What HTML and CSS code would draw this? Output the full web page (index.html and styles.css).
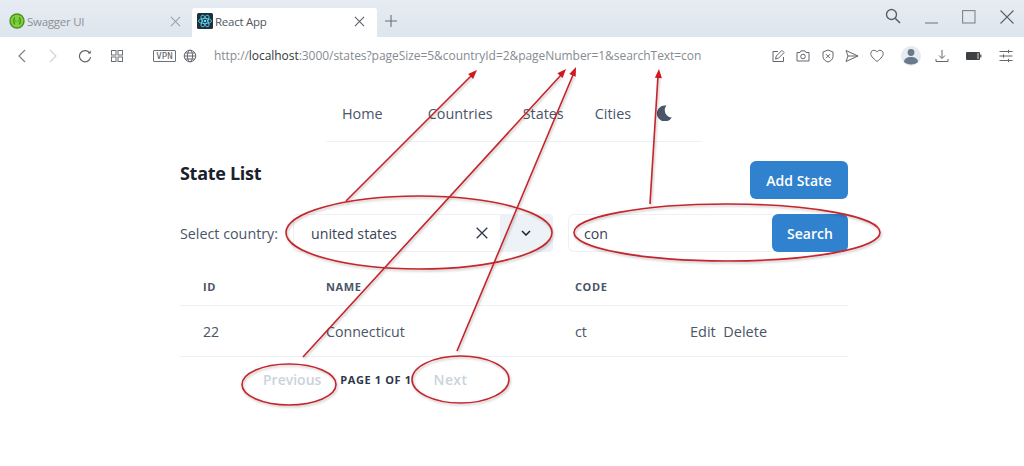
FILE: index.html
```html
<!DOCTYPE html>
<html lang="en">
<head>
<meta charset="utf-8">
<title>React App</title>
<link rel="stylesheet" href="styles.css">
</head>
<body>
<div class="browser">
  <div class="tabbar">
    <div class="tab">
      <svg class="favicon" viewBox="0 0 16 16"><circle cx="8" cy="8" r="7.7" fill="#4f8f25"/><circle cx="8" cy="8" r="6.3" fill="#7fd13b"/><path d="M6 4.600c-1.500 0-.6 3.400-1.700 3.400 1.100 0 .2 3.400 1.700 3.400M10 4.600c1.500 0 .6 3.400 1.700 3.400-1.100 0-.2 3.400-1.700 3.400" fill="none" stroke="#2c6a12" stroke-width="1"/><circle cx="6.800" cy="8" r=".6" fill="#2c6a12"/><circle cx="9.200" cy="8" r=".6" fill="#2c6a12"/></svg>
      <span class="tab-title">Swagger UI</span>
      <svg class="tab-x" viewBox="0 0 12 12"><path d="M1 1l10 10M11 1L1 11" stroke="#9aa0a6" stroke-width="1.100"/></svg>
    </div>
    <div class="tab tab-active">
      <svg class="favicon" viewBox="0 0 16 16"><rect width="16" height="16" rx="1.500" fill="#20303a"/><g fill="none" stroke="#61dafb" stroke-width=".8"><ellipse cx="8" cy="8" rx="6.500" ry="2.600"/><ellipse cx="8" cy="8" rx="6.500" ry="2.600" transform="rotate(60 8 8)"/><ellipse cx="8" cy="8" rx="6.500" ry="2.600" transform="rotate(120 8 8)"/></g><circle cx="8" cy="8" r="1.300" fill="#61dafb"/></svg>
      <span class="tab-title">React App</span>
      <svg class="tab-x" viewBox="0 0 12 12"><path d="M1 1l10 10M11 1L1 11" stroke="#555b63" stroke-width="1.100"/></svg>
    </div>
    <svg class="tab-plus" viewBox="0 0 12 12"><path d="M6 0v12M0 6h12" stroke="#6b7078" stroke-width="1.100"/></svg>
    <div class="window-controls">
      <svg class="win-search" viewBox="0 0 16 16"><circle cx="6.500" cy="6.500" r="5" fill="none" stroke="#5d6064" stroke-width="1.400"/><path d="M10.200 10.200L15 15" stroke="#5d6064" stroke-width="1.600"/></svg>
      <svg class="win-min" viewBox="0 0 14 14"><path d="M0 13h13" stroke="#80858b" stroke-width="1.200"/></svg>
      <svg class="win-max" viewBox="0 0 14 14"><rect x=".6" y=".6" width="12.400" height="12.400" fill="none" stroke="#80858b" stroke-width="1.100"/></svg>
      <svg class="win-close" viewBox="0 0 14 14"><path d="M.5.5l13 13M13.500.5l-13 13" stroke="#5d6064" stroke-width="1.100"/></svg>
    </div>
  </div>
  <div class="toolbar">
    <svg class="tb tb-back" viewBox="0 0 10 14"><path d="M8 1L2 7l6 6" fill="none" stroke="#7b8086" stroke-width="1.200"/></svg>
    <svg class="tb tb-fwd" viewBox="0 0 10 14"><path d="M2 1l6 6-6 6" fill="none" stroke="#ced1d5" stroke-width="1.200"/></svg>
    <svg class="tb tb-reload" viewBox="0 0 14 14"><path d="M11.800 4.200A5.600 5.600 0 1 0 12.600 8" fill="none" stroke="#63676c" stroke-width="1.200"/><path d="M9.600 4.600h3.200V1.400z" fill="#63676c"/></svg>
    <svg class="tb tb-grid" viewBox="0 0 14 14"><g fill="none" stroke="#6d7177"><rect x="1.500" y="1.500" width="4.500" height="4.500"/><rect x="8" y="1.500" width="4.500" height="4.500"/><rect x="1.500" y="8" width="4.500" height="4.500"/><rect x="8" y="8" width="4.500" height="4.500"/></g></svg>
    <span class="vpn">VPN</span>
    <svg class="tb tb-globe" viewBox="0 0 14 14"><g fill="none" stroke="#63676c"><circle cx="7" cy="7" r="5.800"/><ellipse cx="7" cy="7" rx="2.600" ry="5.800"/><path d="M1.200 7h11.600M2 4h10M2 10h10"/></g></svg>
    <div class="url">http://<b>localhost</b>:3000/states?pageSize=5&amp;countryId=2&amp;pageNumber=1&amp;searchText=con</div>
    <div class="ext-icons">
      <svg class="ext" viewBox="0 0 14 14"><path d="M6 2.500H1v10h10.500V8M3.500 10l.8-3 5.600-5.600 2.200 2.200L6.500 9.200z" fill="none" stroke="#63676c" stroke-width="1"/></svg>
      <svg class="ext" viewBox="0 0 14 14"><path d="M1 3.500h3l1-1.600h4l1 1.600h3v8.500H1z" fill="none" stroke="#63676c"/><circle cx="7" cy="7.500" r="2.300" fill="none" stroke="#63676c"/></svg>
      <svg class="ext" viewBox="0 0 14 14"><path d="M7 1l5 2v4.500c0 3-2.500 4.700-5 5.500-2.500-.8-5-2.500-5-5.500V3z" fill="none" stroke="#63676c"/><path d="M5 5.200l4 4M9 5.200l-4 4" stroke="#63676c"/></svg>
      <svg class="ext" viewBox="0 0 14 14"><path d="M1 1.500L13 7 1 12.500 3 7zM3 7h10" fill="none" stroke="#63676c"/></svg>
      <svg class="ext" viewBox="0 0 14 14"><path d="M7 12.500C2.500 9 .8 6.800.8 4.500.8 2.500 2.300 1.300 4 1.300c1.300 0 2.400.7 3 1.800.6-1.100 1.700-1.800 3-1.800 1.700 0 3.200 1.200 3.200 3.200 0 2.300-1.700 4.500-6.200 8z" fill="none" stroke="#63676c"/></svg>
      <svg class="avatar" viewBox="0 0 20 20"><circle cx="10" cy="10" r="10" fill="#e6ebf1"/><circle cx="10" cy="6.500" r="3.400" fill="#6a7a8c"/><path d="M3 16c0-3.500 3-5 7-5s7 1.500 7 5c-1.500 1.600-4 2.400-7 2.400S4.500 17.600 3 16z" fill="#6a7a8c"/></svg>
      <svg class="ext ext-dl" viewBox="0 0 14 14"><path d="M7 1v8M4 6.500L7 9.500l3-3M1 10v2.500h12V10" fill="none" stroke="#63676c"/></svg>
      <svg class="ext ext-batt" viewBox="0 0 16 10"><rect x="0" y="1" width="14" height="8" rx="1" fill="#3e4144"/><rect x="11" y="2" width="2" height="6" fill="#8a8e92"/><rect x="14" y="3.500" width="1.500" height="3" fill="#63676c"/></svg>
      <svg class="ext ext-tune" viewBox="0 0 14 14"><path d="M.5 2.500h13M.5 7h13M.5 11.500h13M9.500.8v3.400M4.500 5.300v3.400M9.500 9.800v3.400" fill="none" stroke="#63676c"/></svg>
    </div>
  </div>
  <div class="page">
    <nav class="nav">
      <a class="nav-link nav-home">Home</a>
      <a class="nav-link nav-countries">Countries</a>
      <a class="nav-link nav-states">States</a>
      <a class="nav-link nav-cities">Cities</a>
      <svg class="moon" viewBox="0 0 16 16"><path d="M10.500.6A8 8 0 1 0 15.800 12.400 7.200 7.200 0 0 1 10.500.6z" fill="#4a5568"/></svg>
    </nav>
    <main class="content">
      <div class="head-row">
        <h1 class="title">State List</h1>
        <button class="btn btn-add">Add State</button>
      </div>
      <div class="filter-row">
        <label class="select-label">Select country:</label>
        <div class="select">
          <span class="select-value">united states</span>
          <svg class="select-clear" viewBox="0 0 12 12"><path d="M.7.7l10.600 10.600M11.300.7L.7 11.300" stroke="#2d3748" stroke-width="1.300"/></svg>
          <span class="select-toggle"><svg viewBox="0 0 10 6" class="chev"><path d="M1 1l4 4 4-4" fill="none" stroke="#1a202c" stroke-width="1.500"/></svg></span>
        </div>
        <div class="search">
          <span class="search-input">con</span>
          <button class="btn btn-search">Search</button>
        </div>
      </div>
      <div class="table">
        <div class="tr th-row">
          <span class="c-id">ID</span><span class="c-name">NAME</span><span class="c-code">CODE</span><span class="c-act"></span>
        </div>
        <div class="tr td-row">
          <span class="c-id">22</span><span class="c-name">Connecticut</span><span class="c-code">ct</span><span class="c-act">Edit&nbsp; Delete</span>
        </div>
      </div>
      <div class="pager">
        <span class="pg-btn pg-prev">Previous</span>
        <span class="pg-text">PAGE 1 OF 1</span>
        <span class="pg-btn pg-next">Next</span>
      </div>
    </main>
  </div>
  <svg class="annot" viewBox="0 0 1024 466">
    <defs><filter id="sh" x="-5%" y="-5%" width="110%" height="115%"><feDropShadow dx="1" dy="1.500" stdDeviation="1" flood-color="#000" flood-opacity=".25"/></filter></defs>
    <g filter="url(#sh)" fill="none" stroke="#c4252c" stroke-width="1.600">
      <ellipse cx="419" cy="232.500" rx="133" ry="36.500"/>
      <ellipse cx="727" cy="232.500" rx="153" ry="28.500"/>
      <ellipse cx="289" cy="384.500" rx="47" ry="20.500"/>
      <ellipse cx="460.500" cy="379.500" rx="48.500" ry="23.500"/>
      <path d="M346 201L472 75M303 357L561 75M457 351L573 75M650 204L658 76"/>
    </g>
    <g fill="#d01820">
      <path d="M477 70l-8.900 3.900 5 5z"/>
      <path d="M566 69l-8.600 4.200 5.200 4.800z"/>
      <path d="M576 67l-6.700 6.900 6.400 2.800z"/>
      <path d="M659 69l-4.100 8.800 7 .4z"/>
    </g>
  </svg>
</div>
</body>
</html>
```
FILE: styles.css
```css
* { box-sizing: border-box; }
html, body { margin: 0; height: 100%; background: #fff; overflow: hidden; }
body { font-family: "Open Sans", "Noto Sans", sans-serif; color: #4a5568; }
.browser { position: relative; width: 1024px; height: 466px; }

.tabbar { height: 37px; display: flex; align-items: flex-end; padding-left: 3px; background: linear-gradient(#e7ecf3, #dde5ed); }
.tab { width: 192px; height: 29px; display: flex; align-items: center; padding: 0 5px 3px 6px; font-size: 11.5px; letter-spacing: -.25px; color: #8b9097; }
.tab-active { width: 185px; margin-left: -3px; background: #fff; color: #51565c; border-radius: 3px 3px 0 0; padding-left: 5px; }
.favicon { width: 16px; height: 16px; flex: none; }
.tab-title { margin-left: 2px; flex: 1; }
.tab-active .tab-title { margin-left: 2px; }
.tab-x { width: 11px; height: 11px; margin-right: 1px; }
.tab:first-child .tab-x { margin-right: 9px; }
.tab-active .tab-x { margin-right: 7px; }
.tab-plus { width: 12px; height: 12px; margin: 0 0 10px 8px; }
.window-controls { margin-left: auto; height: 37px; display: flex; align-items: center; position: relative; padding-right: 10px; }
.win-search { width: 16px; height: 16px; margin: 0 24px 6px 0; }
.win-min { width: 14px; height: 14px; margin: 0 23px 4px 0; }
.win-max { width: 14px; height: 14px; margin: 0 24px 4px 0; }
.win-close { width: 14px; height: 14px; margin: 0 0 4px 0; }

.toolbar { height: 37px; display: flex; align-items: center; position: relative; }
.tb { flex: none; }
.tb-back { width: 10px; height: 14px; margin-left: 17px; }
.tb-fwd { width: 10px; height: 14px; margin-left: 21px; }
.tb-reload { width: 14px; height: 14px; margin-left: 20px; }
.tb-grid { width: 14px; height: 14px; margin-left: 18px; }
.vpn { margin-left: 29px; width: 23px; height: 12px; border: 1px solid #6d7177; border-radius: 1px; font: 9px/10px "DejaVu Sans Mono", monospace; color: #5d6165; text-align: center; }
.tb-globe { width: 14px; height: 14px; margin-left: 7px; }
.url { margin-left: 17px; font-size: 12px; letter-spacing: -.05px; color: #868b91; white-space: nowrap; }
.url b { font-weight: 400; color: #33373b; }
.ext-icons { margin-left: auto; display: flex; align-items: center; padding-right: 11px; }
.ext { width: 14px; height: 14px; margin-right: 10.5px; }
.avatar { width: 20px; height: 20px; margin: 0 14px 0 7px; }
.ext-dl { margin-right: 17px; }
.ext-batt { width: 16px; height: 10px; margin-right: 17px; }
.ext-tune { margin-right: 0; }

.page { display: flex; flex-direction: column; align-items: center; }
.nav { width: 376px; height: 68px; margin-left: 4px; padding: 13px 0 2px 16px; display: flex; align-items: center; border-bottom: 1px solid #edf0f4; font-size: 14.4px; color: #4a5568; }
.nav-countries { margin-left: 45px; }
.nav-states { margin-left: 30px; }
.nav-cities { margin-left: 31px; }
.moon { width: 16px; height: 16px; margin-left: 25px; }

.content { width: 668px; margin-left: 4px; }
.head-row { display: flex; justify-content: space-between; align-items: flex-start; padding-top: 19px; }
.title { margin: 0; font-size: 18px; line-height: 24px; font-weight: 700; letter-spacing: -.3px; color: #1a202c; }
.btn { border: 0; background: #3182ce; color: #fff; font-family: inherit; font-size: 14px; font-weight: 600; border-radius: 6px; }
.btn-add { width: 98px; height: 38px; }

.filter-row { display: flex; align-items: center; margin-top: 15px; height: 38px; }
.select-label { font-size: 14.3px; width: 113px; }
.select { width: 260px; height: 38px; display: flex; align-items: center; border: 1px solid #edf0f4; border-radius: 4px; padding-left: 17px; font-size: 14.2px; color: #3a4353; }
.select-value { flex: 1; }
.select-clear { width: 12px; height: 12px; margin-right: 12px; }
.select-toggle { width: 52px; height: 36px; background: #edf2f7; display: flex; align-items: center; justify-content: center; border-radius: 0 3px 3px 0; }
.chev { width: 10px; height: 6px; }
.search { margin-left: 15px; flex: 1; display: flex; height: 38px; }
.search-input { flex: 1; border: 1px solid #edf0f4; border-right: 0; border-radius: 6px 0 0 6px; display: flex; align-items: center; padding: 1px 0 0 15px; font-size: 14.2px; color: #3a4353; }
.btn-search { width: 76px; }

.table { margin-top: 16px; }
.tr { display: flex; align-items: center; border-bottom: 1px solid #edf0f4; }
.th-row { height: 38px; font-size: 11px; font-weight: 700; letter-spacing: .6px; color: #4a5568; }
.td-row { height: 51px; font-size: 14.2px; color: #4a5568; }
.c-id { width: 146px; padding-left: 23px; }
.c-name { width: 249px; }
.c-code { width: 115px; }
.c-act { flex: 1; font-size: 14.5px; }

.pager { display: flex; align-items: center; height: 44px; padding-left: 83px; }
.pg-btn { font-size: 14px; font-weight: 600; color: #ccd2da; }
.pg-text { margin-left: 19px; font-size: 11px; font-weight: 700; letter-spacing: .6px; color: #2d3748; }
.pg-next { margin-left: 22px; letter-spacing: .4px; }

.annot { position: absolute; inset: 0; width: 1024px; height: 466px; pointer-events: none; }
```
